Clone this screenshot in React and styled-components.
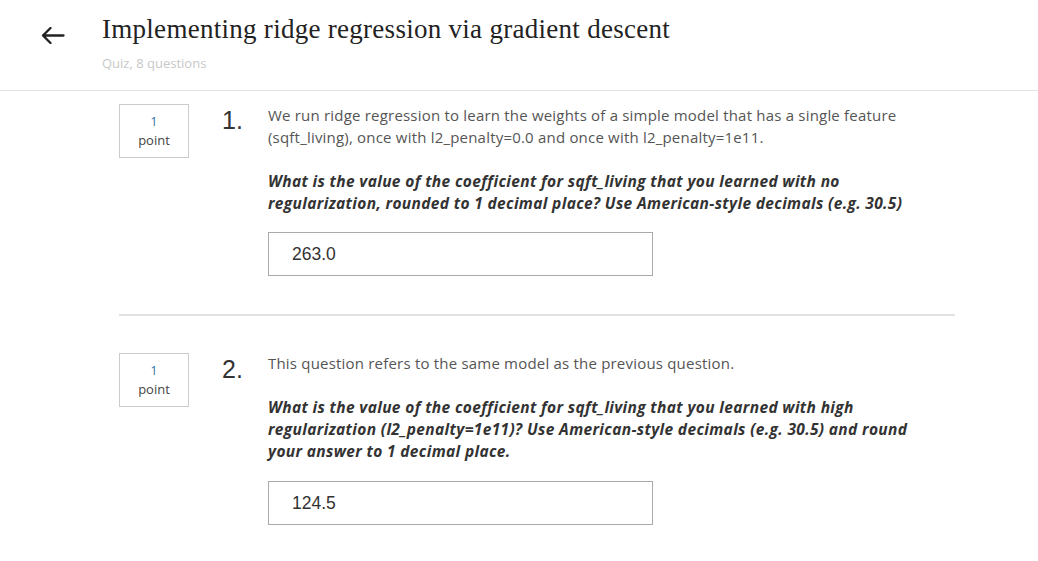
import React from "react";
import styled, { createGlobalStyle } from "styled-components";

const Global = createGlobalStyle`
  html, body { margin: 0; padding: 0; background: #fff; }
  body { font-family: "Open Sans", "Noto Sans", sans-serif; color: #444; }
  * { box-sizing: border-box; }
`;

const Header = styled.header`
  display: flex;
  align-items: flex-start;
  height: 91px;
  padding-left: 40px;
  border-bottom: 1px solid #e3e3e3;
`;

const BackButton = styled.button`
  display: flex;
  align-items: center;
  justify-content: center;
  width: 26px;
  height: 20px;
  margin-top: 25px;
  margin-right: 36px;
  padding: 0;
  border: none;
  background: none;
  color: #222;
  cursor: pointer;
`;

const TitleBlock = styled.div`
  display: flex;
  flex-direction: column;
  padding-top: 14px;
`;

const Title = styled.h1`
  margin: 0;
  font-family: "Liberation Serif", "DejaVu Serif", serif;
  font-weight: 400;
  font-size: 27px;
  line-height: 30px;
  color: #222;
  letter-spacing: 0.28px;
`;

const Subtitle = styled.div`
  margin-top: 11px;
  font-size: 13px;
  line-height: 16px;
  color: #c8c8c8;
`;

const Main = styled.main`
  width: 836px;
  margin-left: 119px;
`;

const Question = styled.section`
  display: flex;
  align-items: flex-start;
  padding-top: ${(p) => p.$top}px;
  padding-bottom: 38px;
  border-bottom: ${(p) => (p.$divider ? "2px solid #e2e2e2" : "none")};
`;

const PointBox = styled.div`
  flex: none;
  width: 70px;
  height: 54px;
  margin-top: ${(p) => p.$offset || 0}px;
  margin-right: 33px;
  border: 1px solid #cccccc;
  display: flex;
  flex-direction: column;
  align-items: center;
  justify-content: center;
  font-size: 13px;
  line-height: 19px;
  color: #444;
`;

const PointValue = styled.span`
  font-size: 12px;
  color: #2a6ea8;
`;

const Number = styled.div`
  flex: none;
  width: 46px;
  margin-top: ${(p) => p.$offset}px;
  font-family: "Liberation Sans", Arial, sans-serif;
  font-size: 25px;
  line-height: 24px;
  color: #333;
`;

const Body = styled.div`
  flex: none;
  width: 660px;
  display: flex;
  flex-direction: column;
`;

const Prompt = styled.p`
  margin: 0;
  font-size: 15px;
  letter-spacing: 0.2px;
  line-height: 22px;
  color: #555;
`;

const Emphasis = styled.p`
  margin: 22px 0 0;
  font-size: 15.5px;
  letter-spacing: 0.35px;
  line-height: 22px;
  font-weight: 700;
  font-style: italic;
  color: #333;
`;

const Answer = styled.input`
  width: 385px;
  height: 44px;
  margin-top: ${(p) => p.$gap}px;
  padding: 0 0 0 23px;
  border: 1px solid #aaaaaa;
  border-radius: 0;
  font-family: "Liberation Sans", Arial, sans-serif;
  font-size: 17.5px;
  color: #333;
  outline: none;
`;

const Arrow = () => (
  <svg width="24" height="17" viewBox="0 0 24 17" fill="none">
    <path
      d="M22.5 8.5H2 M9.5 1L2 8.5L9.5 16"
      stroke="currentColor"
      strokeWidth="2.3"
      strokeLinecap="round"
      strokeLinejoin="round"
    />
  </svg>
);

export default function App() {
  return (
    <>
      <Global />
      <Header>
        <BackButton aria-label="Back">
          <Arrow />
        </BackButton>
        <TitleBlock>
          <Title>Implementing ridge regression via gradient descent</Title>
          <Subtitle>Quiz, 8 questions</Subtitle>
        </TitleBlock>
      </Header>
      <Main>
        <Question $top={13} $divider>
          <PointBox>
            <PointValue>1</PointValue>
            <span>point</span>
          </PointBox>
          <Number $offset={4}>1.</Number>
          <Body>
            <Prompt>
              We run ridge regression to learn the weights of a simple model that has a single feature
              (sqft_living), once with l2_penalty=0.0 and once with l2_penalty=1e11.
            </Prompt>
            <Emphasis>
              What is the value of the coefficient for sqft_living that you learned with no
              regularization, rounded to 1 decimal place? Use American-style decimals (e.g. 30.5)
            </Emphasis>
            <Answer $gap={18} defaultValue="263.0" />
          </Body>
        </Question>
        <Question $top={36}>
          <PointBox $offset={1}>
            <PointValue>1</PointValue>
            <span>point</span>
          </PointBox>
          <Number $offset={5}>2.</Number>
          <Body>
            <Prompt>This question refers to the same model as the previous question.</Prompt>
            <Emphasis>
              What is the value of the coefficient for sqft_living that you learned with high
              regularization (l2_penalty=1e11)? Use American-style decimals (e.g. 30.5) and round
              your answer to 1 decimal place.
            </Emphasis>
            <Answer $gap={19} defaultValue="124.5" />
          </Body>
        </Question>
      </Main>
    </>
  );
}
